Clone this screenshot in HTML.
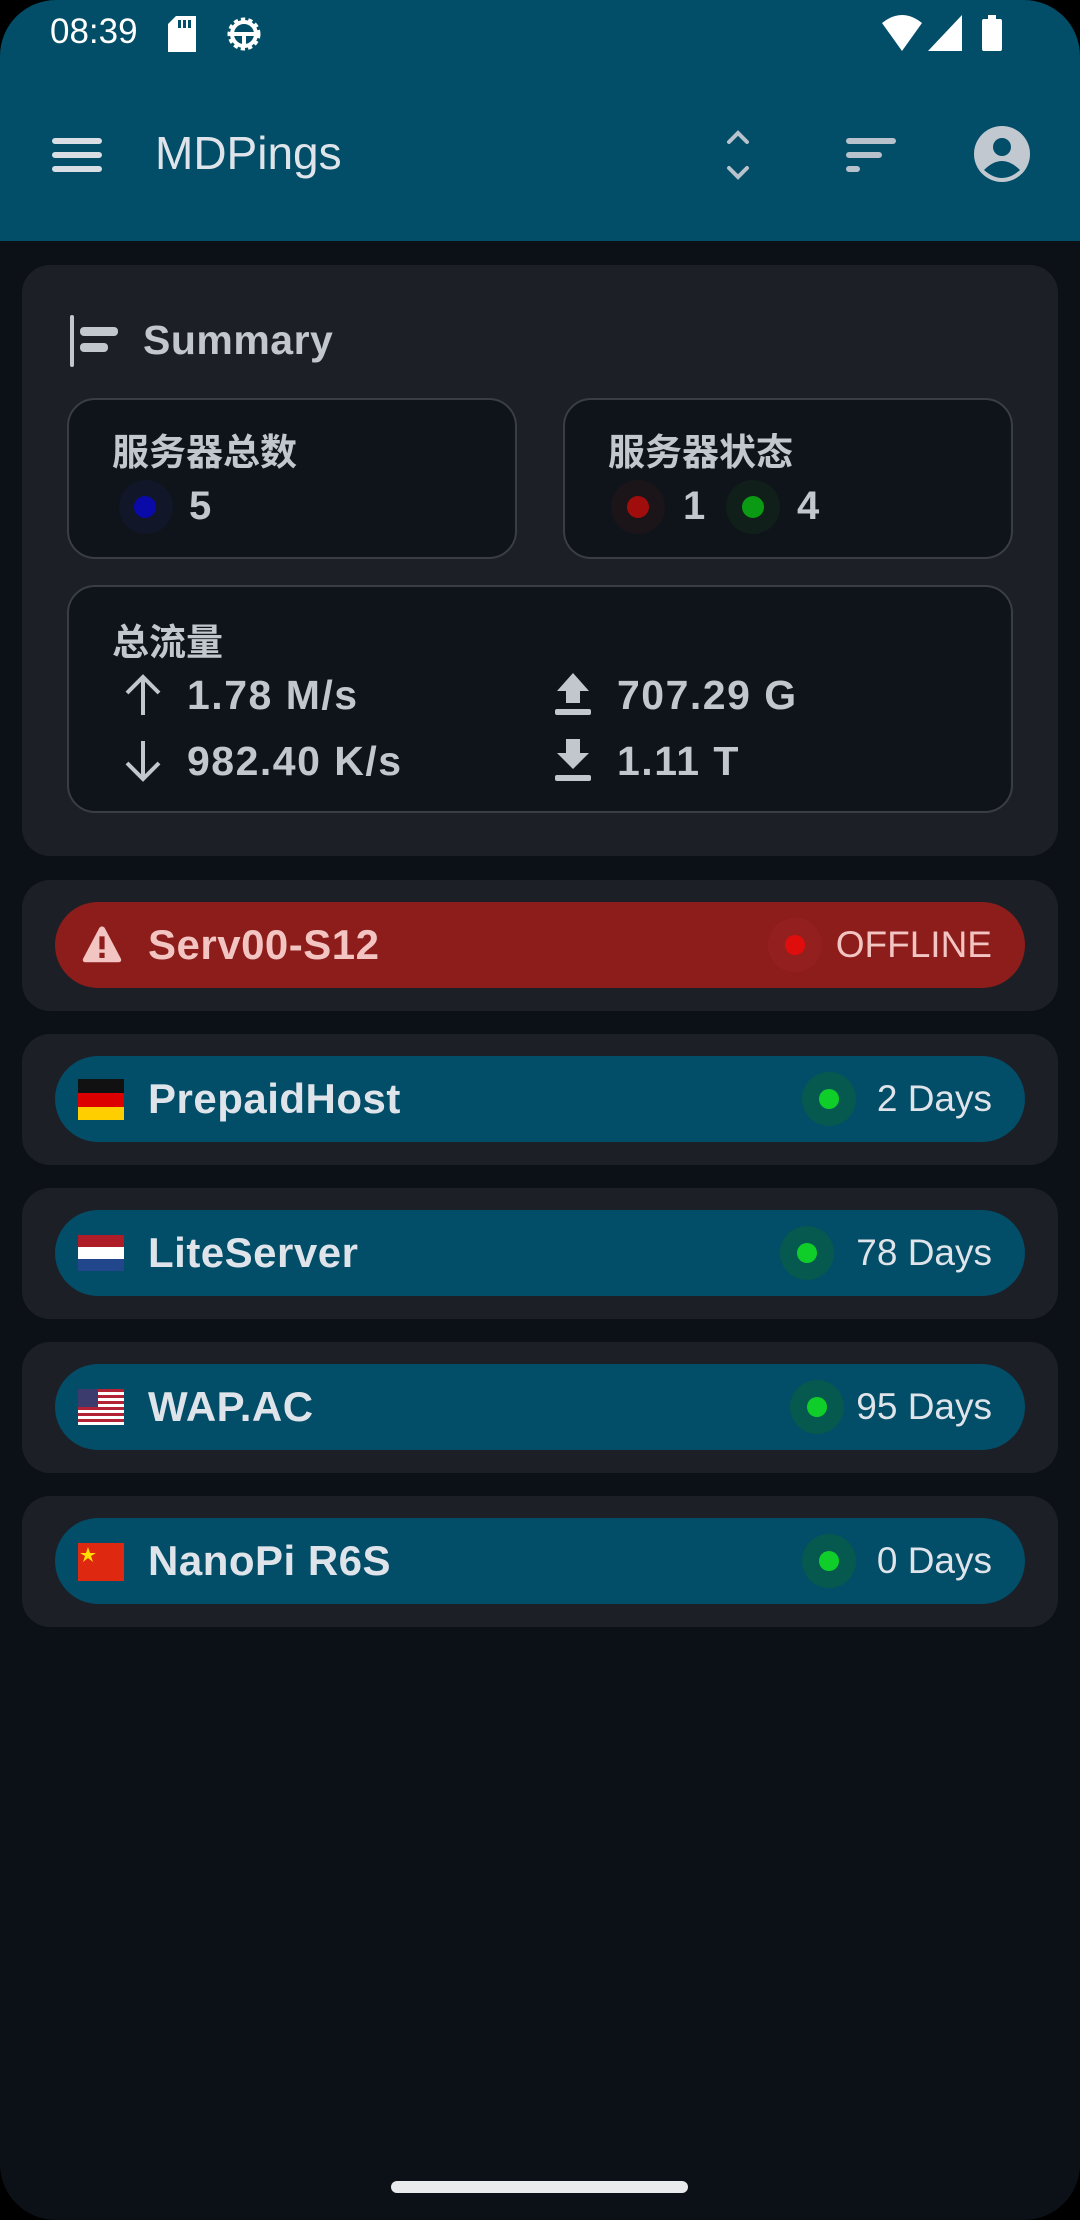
<!DOCTYPE html>
<html><head><meta charset="utf-8"><style>
*{margin:0;padding:0;box-sizing:border-box}
html,body{width:1080px;height:2220px;background:#000;overflow:hidden}
body{font-family:"Liberation Sans","Noto Sans CJK SC",sans-serif;}
#screen{position:absolute;left:0;top:0;width:1080px;height:2220px;background:#0c1117;border-radius:56px;overflow:hidden}
.abs{position:absolute}
#bar{left:0;top:0;width:1080px;height:241px;background:#024d67}
.t{color:#c2c6cd;font-weight:bold;white-space:nowrap}
.v{letter-spacing:1.5px}
.card{background:#1c1f26;border-radius:28px;position:absolute;left:22px;width:1036px}
.box{position:absolute;background:#0f141b;border:2px solid #3a3e44;border-radius:28px}
.pill{position:absolute;left:33px;width:970px;height:86px;top:22px;border-radius:43px;background:#024d67}
.name{position:absolute;left:93px;top:0;line-height:86px;font-size:42px;color:#dfe4ea;font-weight:bold;letter-spacing:0.5px}
.right{position:absolute;right:33px;top:0;line-height:86px;font-size:37px;color:#dfe4ea}
.dot{position:absolute;width:54px;height:54px;border-radius:50%;top:16px}
.dot i{position:absolute;left:17px;top:17px;width:20px;height:20px;border-radius:50%}
.flag{position:absolute;left:23px;top:21px;width:46px;height:44px}
</style></head><body><div id="screen">
<div id="bar" class="abs"></div>
<div class="abs" style="left:50px;top:12px;font-size:35px;color:#fff">08:39</div>
<svg class="abs" style="left:168px;top:16px" width="28" height="36" viewBox="0 0 28 36"><path d="M8 0H28V36H0V8Z" fill="#fff"/><rect x="10" y="4" width="3" height="8" fill="#024d67"/><rect x="15" y="4" width="3" height="8" fill="#024d67"/><rect x="20" y="4" width="3" height="8" fill="#024d67"/></svg>
<svg class="abs" style="left:224px;top:14px" width="40" height="40" viewBox="0 0 40 40"><circle cx="20" cy="20" r="14" fill="none" stroke="#fff" stroke-width="5" stroke-dasharray="4 3"/><circle cx="20" cy="20" r="12" fill="none" stroke="#fff" stroke-width="4"/><path d="M8 20H32M20 20V32" stroke="#fff" stroke-width="4"/></svg>
<svg class="abs" style="left:882px;top:15px" width="40" height="36" viewBox="0 0 40 36"><path d="M0 8Q20-8 40 8L20 36Z" fill="#fff"/></svg>
<svg class="abs" style="left:928px;top:15px" width="34" height="36" viewBox="0 0 34 36"><path d="M34 0V36H0Z" fill="#fff"/></svg>
<svg class="abs" style="left:982px;top:15px" width="20" height="36" viewBox="0 0 20 36"><rect x="6" y="0" width="8" height="4" fill="#fff"/><rect x="0" y="4" width="20" height="32" rx="2" fill="#fff"/></svg>
<svg class="abs" style="left:52px;top:138px" width="50" height="34" viewBox="0 0 50 34"><g stroke="#d9dee4" stroke-width="6" stroke-linecap="round"><path d="M3 3H47M3 17H47M3 31H47"/></g></svg>
<div class="abs" style="left:155px;top:126px;font-size:46px;color:#dfe4ea">MDPings</div>
<svg class="abs" style="left:724px;top:128px" width="28" height="54" viewBox="0 0 28 54"><path d="M5 14L14 5L23 14M5 40L14 49L23 40" fill="none" stroke="#b8c2cc" stroke-width="4" stroke-linecap="round"/></svg>
<svg class="abs" style="left:846px;top:138px" width="50" height="34" viewBox="0 0 50 34"><g stroke="#b8c2cc" stroke-width="6" stroke-linecap="round"><path d="M3 3H47M3 17H33M3 31H11"/></g></svg>
<svg class="abs" style="left:974px;top:126px" width="56" height="56" viewBox="0 0 56 56"><circle cx="28" cy="28" r="28" fill="#c2c8d0"/><circle cx="28" cy="21" r="9" fill="#024d67"/><path d="M10 44Q28 26 46 44Q28 60 10 44Z" fill="#024d67"/></svg>
<div class="card" style="top:265px;height:591px">
 <svg class="abs" style="left:48px;top:50px" width="60" height="52" viewBox="0 0 60 52"><rect x="0" y="0" width="4" height="52" rx="2" fill="#c2c6cd"/><rect x="10" y="12" width="38" height="9" rx="4" fill="#c2c6cd"/><rect x="10" y="28" width="28" height="9" rx="4" fill="#c2c6cd"/></svg>
 <div class="abs t" style="left:121px;top:52px;font-size:41px;letter-spacing:0.5px">Summary</div>
 <div class="box" style="left:45px;top:133px;width:450px;height:161px">
  <div class="abs t" style="left:43px;top:22px;font-size:37px">服务器总数</div>
  <div class="abs" style="left:50px;top:80px;width:54px;height:54px;border-radius:50%;background:#111628"></div>
  <div class="abs" style="left:65px;top:96px;width:22px;height:22px;border-radius:50%;background:#0a0aa8"></div>
  <div class="abs t" style="left:120px;top:84px;font-size:40px">5</div>
 </div>
 <div class="box" style="left:541px;top:133px;width:450px;height:161px">
  <div class="abs t" style="left:43px;top:22px;font-size:37px">服务器状态</div>
  <div class="abs" style="left:46px;top:80px;width:54px;height:54px;border-radius:50%;background:#1b1519"></div>
  <div class="abs" style="left:62px;top:96px;width:22px;height:22px;border-radius:50%;background:#a00d0d"></div>
  <div class="abs t" style="left:118px;top:84px;font-size:40px">1</div>
  <div class="abs" style="left:161px;top:80px;width:54px;height:54px;border-radius:50%;background:#101f19"></div>
  <div class="abs" style="left:177px;top:96px;width:22px;height:22px;border-radius:50%;background:#0a9a14"></div>
  <div class="abs t" style="left:232px;top:84px;font-size:40px">4</div>
 </div>
 <div class="box" style="left:45px;top:320px;width:946px;height:228px">
  <div class="abs t" style="left:43px;top:25px;font-size:37px">总流量</div>
  <svg class="abs" style="left:52px;top:86px" width="44" height="44" viewBox="0 0 44 44"><path d="M22 42V4M6 20L22 4L38 20" fill="none" stroke="#c2c6cd" stroke-width="4"/></svg>
  <div class="abs t v" style="left:118px;top:85px;font-size:41px">1.78 M/s</div>
  <svg class="abs" style="left:52px;top:152px" width="44" height="44" viewBox="0 0 44 44"><path d="M22 2V40M6 24L22 40L38 24" fill="none" stroke="#c2c6cd" stroke-width="4"/></svg>
  <div class="abs t v" style="left:118px;top:151px;font-size:41px">982.40 K/s</div>
  <svg class="abs" style="left:484px;top:84px" width="40" height="46" viewBox="0 0 40 46"><path d="M20 2L36 20H27V32H13V20H4Z" fill="#c2c6cd"/><rect x="2" y="38" width="36" height="6" rx="2" fill="#c2c6cd"/></svg>
  <div class="abs t v" style="left:548px;top:85px;font-size:41px">707.29 G</div>
  <svg class="abs" style="left:484px;top:150px" width="40" height="46" viewBox="0 0 40 46"><path d="M13 2H27V16H36L20 32L4 16H13Z" fill="#c2c6cd"/><rect x="2" y="38" width="36" height="6" rx="2" fill="#c2c6cd"/></svg>
  <div class="abs t v" style="left:548px;top:151px;font-size:41px">1.11 T</div>
 </div>
</div>
<div class="card" style="top:880px;height:131px"><div class="pill" style="background:#8c1d1b">
 <svg class="flag" viewBox="0 0 46 44" style="left:27px;top:24px;width:40px;height:38px"><path d="M20 2Q23-1 26 2L45 38Q46 42 42 42H4Q0 42 1 38Z" fill="#f2c4c2"/><rect x="20" y="12" width="6" height="15" fill="#8c1d1b"/><rect x="20" y="31" width="6" height="6" fill="#8c1d1b"/></svg>
 <div class="name" style="color:#f2c4c2">Serv00-S12</div>
 <div class="dot" style="left:713px;background:#93201e"><i style="background:#e00d0d"></i></div>
 <div class="right" style="color:#f2c4c2">OFFLINE</div>
</div></div>
<div class="card" style="top:1034px;height:131px"><div class="pill">
 <svg class="flag" viewBox="0 0 46 44"><rect y="2" width="46" height="14" fill="#111"/><rect y="16" width="46" height="14" fill="#dd0000"/><rect y="30" width="46" height="13" fill="#ffce00"/></svg>
 <div class="name">PrepaidHost</div>
 <div class="dot" style="left:747px;background:#06594f"><i style="background:#0fce2a"></i></div>
 <div class="right">2 Days</div>
</div></div>
<div class="card" style="top:1188px;height:131px"><div class="pill">
 <svg class="flag" viewBox="0 0 46 44"><rect y="4" width="46" height="12" fill="#ae1c28"/><rect y="16" width="46" height="12" fill="#fff"/><rect y="28" width="46" height="12" fill="#21468b"/></svg>
 <div class="name">LiteServer</div>
 <div class="dot" style="left:725px;background:#06594f"><i style="background:#0fce2a"></i></div>
 <div class="right">78 Days</div>
</div></div>
<div class="card" style="top:1342px;height:131px"><div class="pill">
 <svg class="flag" viewBox="0 0 46 44"><rect y="4" width="46" height="36" fill="#fff"/><g fill="#b22234"><rect y="4" width="46" height="3"/><rect y="10" width="46" height="3"/><rect y="16" width="46" height="3"/><rect y="22" width="46" height="3"/><rect y="28" width="46" height="3"/><rect y="34" width="46" height="3"/></g><rect y="4" width="20" height="18" fill="#3c3b6e"/></svg>
 <div class="name">WAP.AC</div>
 <div class="dot" style="left:735px;background:#06594f"><i style="background:#0fce2a"></i></div>
 <div class="right">95 Days</div>
</div></div>
<div class="card" style="top:1496px;height:131px"><div class="pill">
 <svg class="flag" viewBox="0 0 46 44"><rect y="4" width="46" height="38" fill="#de2910"/><path d="M10 8L12 14H18L13 17L15 23L10 19L5 23L7 17L2 14H8Z" fill="#ffde00"/></svg>
 <div class="name">NanoPi R6S</div>
 <div class="dot" style="left:747px;background:#06594f"><i style="background:#0fce2a"></i></div>
 <div class="right">0 Days</div>
</div></div>
<div class="abs" style="left:391px;top:2181px;width:297px;height:12px;border-radius:6px;background:#e8eaeb"></div>
</div></body></html>
